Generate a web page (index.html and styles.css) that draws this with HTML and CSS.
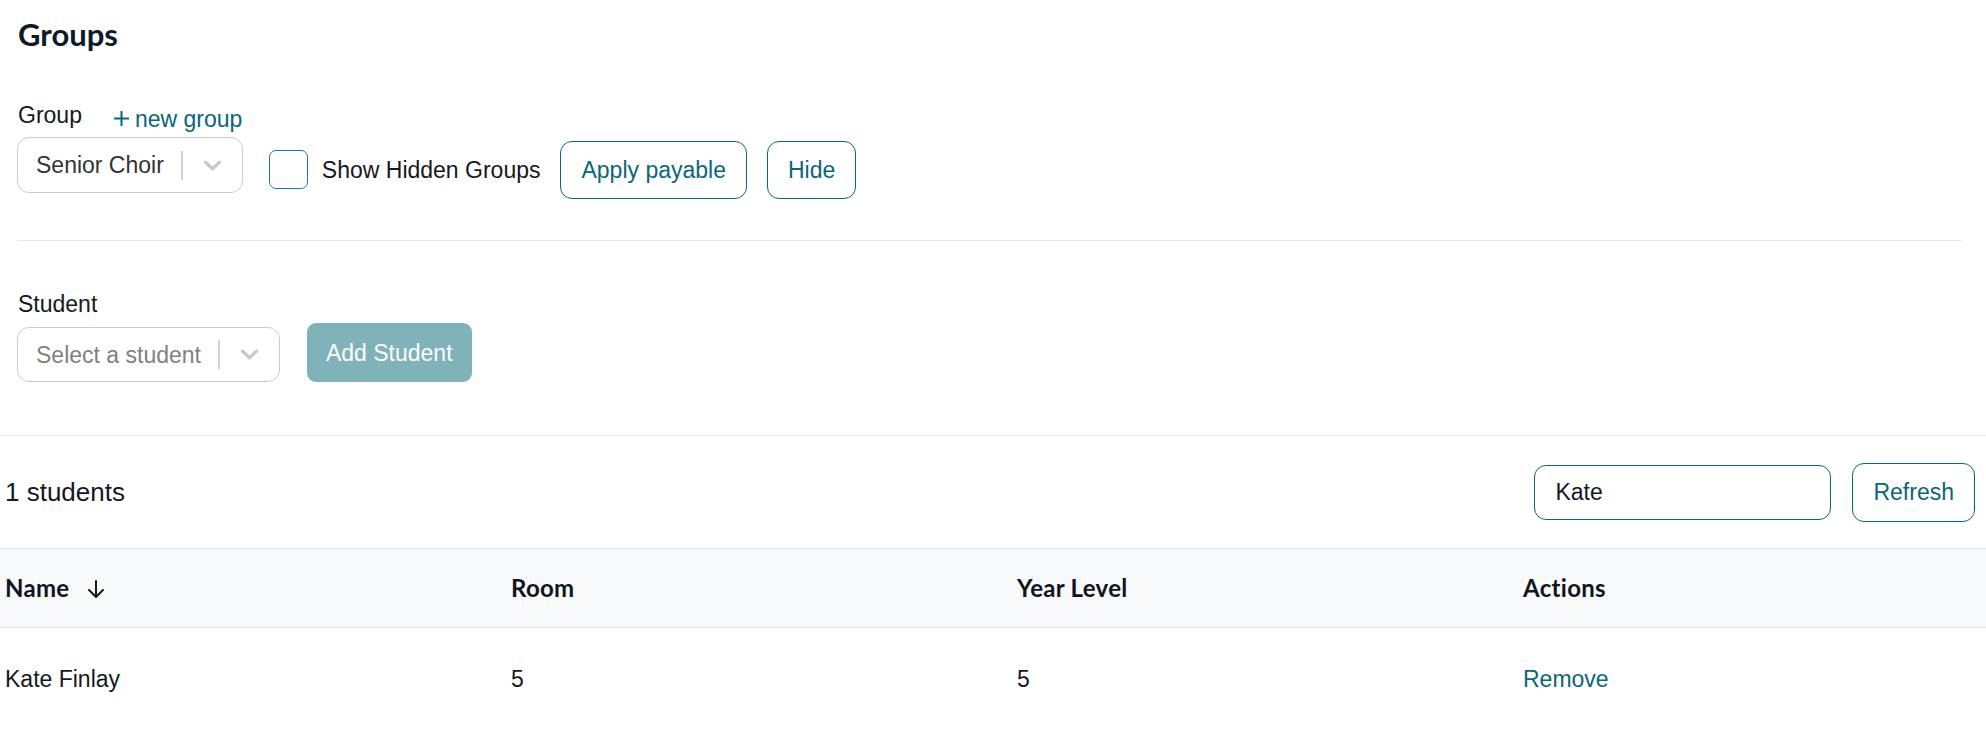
FILE: index.html
```html
<!DOCTYPE html>
<html lang="en">
<head>
<meta charset="utf-8">
<title>Groups</title>
<link rel="stylesheet" href="styles.css">
</head>
<body>
<div class="top">
  <h1 class="title">Groups</h1>

  <div class="group-row">
    <div class="field">
      <div class="label-row">
        <span class="label">Group</span>
        <a class="new-link" href="#"><svg class="plus" viewBox="0 0 17 17" width="17" height="17"><path d="M8.5 1v15M1 8.5h15" stroke="#0a6679" stroke-width="2" fill="none"/></svg>new group</a>
      </div>
      <div class="select select-group">
        <span class="select-value">Senior Choir</span>
        <span class="select-sep"></span>
        <svg class="chev" viewBox="0 0 19 11" width="19" height="11"><path d="M2.5 2.2L9.5 8.7L16.5 2.2" stroke="#c9c9c9" stroke-width="3.4" fill="none" stroke-linecap="round" stroke-linejoin="round"/></svg>
      </div>
    </div>
    <label class="check">
      <span class="box"></span>
      <span class="check-text">Show Hidden Groups</span>
    </label>
    <button class="btn btn-outline">Apply payable</button>
    <button class="btn btn-outline">Hide</button>
  </div>

  <div class="divider"></div>

  <div class="student-row">
    <div class="field">
      <div class="label student-label">Student</div>
      <div class="select select-student">
        <span class="select-placeholder">Select a student</span>
        <span class="select-sep"></span>
        <svg class="chev" viewBox="0 0 19 11" width="19" height="11"><path d="M2.5 2.2L9.5 8.7L16.5 2.2" stroke="#c9c9c9" stroke-width="3.4" fill="none" stroke-linecap="round" stroke-linejoin="round"/></svg>
      </div>
    </div>
    <button class="btn btn-disabled">Add Student</button>
  </div>
</div>

<div class="toolbar">
  <span class="count">1 students</span>
  <div class="tools">
    <input class="search" type="text" value="Kate">
    <button class="btn btn-outline btn-refresh">Refresh</button>
  </div>
</div>

<table class="table">
  <colgroup>
    <col class="c1"><col class="c2"><col class="c3"><col class="c4">
  </colgroup>
  <thead>
    <tr>
      <th>Name<svg class="sort" viewBox="0 0 18 19" width="18" height="19"><path d="M9 1v16M2 10l7 7 7-7" stroke="#14181f" stroke-width="2" fill="none" stroke-linecap="round" stroke-linejoin="round"/></svg></th>
      <th>Room</th>
      <th>Year Level</th>
      <th>Actions</th>
    </tr>
  </thead>
  <tbody>
    <tr>
      <td>Kate Finlay</td>
      <td>5</td>
      <td>5</td>
      <td><a class="remove" href="#">Remove</a></td>
    </tr>
  </tbody>
</table>
</body>
</html>
```

FILE: styles.css
```css
* { box-sizing: border-box; }

html, body {
  margin: 0;
  padding: 0;
  background: #ffffff;
}

body {
  font-family: "Liberation Sans", Arial, sans-serif;
  font-size: 23px;
  color: #14181f;
  overflow: hidden;
}

.top {
  padding: 16px 24px 53px 17px;
}

.title {
  margin: 0;
  font-family: Lato, "Noto Sans", sans-serif;
  font-weight: 700;
  font-size: 31px;
  line-height: 36px;
  color: #0d1a29;
  padding-left: 1px;
}

.group-row {
  display: flex;
  align-items: flex-end;
  margin-top: 50px;
}

.field {
  display: flex;
  flex-direction: column;
}

.label-row {
  display: flex;
  align-items: flex-start;
  height: 30px;
  margin-bottom: 5px;
}

.label {
  font-size: 23px;
  line-height: 26px;
  color: #14181f;
  padding-left: 1px;
}

.new-link {
  display: flex;
  align-items: center;
  margin-top: 4px;
  margin-left: 31px;
  line-height: 26px;
  color: #0a6679;
  text-decoration: none;
}

.plus {
  display: block;
  width: 17px;
  height: 17px;
  margin-right: 5px;
  margin-top: -2px;
}

.select {
  display: flex;
  align-items: center;
  border: 1px solid #cccccc;
  border-radius: 12px;
  background: #ffffff;
  padding: 0 20px 0 18px;
}

.select-group {
  height: 56px;
  margin-bottom: 6px;
}

.select-student {
  height: 55px;
}

.select-value {
  color: #333333;
  line-height: 26px;
}

.select-placeholder {
  color: #808080;
  line-height: 26px;
}

.select-sep {
  width: 2px;
  height: 29px;
  background: #d2d2d2;
  margin: 0 20px 0 17px;
}

.chev {
  display: block;
  width: 19px;
  height: 11px;
}

.check {
  display: flex;
  align-items: center;
  margin-left: 26px;
  margin-bottom: 10px;
}

.box {
  width: 39px;
  height: 39px;
  border: 1.5px solid #1f74c0;
  border-radius: 7px;
  background: #ffffff;
}

.check-text {
  margin-left: 14px;
  line-height: 26px;
  color: #14181f;
}

.btn {
  font-family: "Liberation Sans", Arial, sans-serif;
  font-size: 23px;
  line-height: 26px;
  padding: 0 20px;
  border-radius: 12px;
  cursor: pointer;
}

.btn-outline {
  height: 58px;
  margin-left: 20px;
  background: #ffffff;
  border: 1.5px solid #0a6679;
  color: #0a6679;
}

.btn-disabled {
  height: 59px;
  margin-left: 27px;
  padding: 0 19px;
  border: none;
  border-radius: 9px;
  background: #7fb2b9;
  color: #ffffff;
}

.divider {
  height: 1px;
  background: #e2e8f0;
  margin-top: 41px;
}

.student-row {
  display: flex;
  align-items: flex-end;
  margin-top: 50px;
}

.student-label {
  margin-bottom: 10px;
}

.toolbar {
  display: flex;
  align-items: center;
  justify-content: space-between;
  height: 113px;
  border-top: 1px solid #e2e8f0;
  padding: 0 11px 0 5px;
}

.count {
  font-size: 26px;
  line-height: 30px;
  color: #14181f;
}

.tools {
  display: flex;
  align-items: center;
}

.search {
  width: 297px;
  height: 55px;
  border: 1.5px solid #0a6679;
  border-radius: 12px;
  padding: 0 20px;
  font-family: "Liberation Sans", Arial, sans-serif;
  font-size: 23px;
  color: #14181f;
  outline: none;
}

.btn-refresh {
  height: 59px;
  margin-left: 21px;
}

.table {
  width: 100%;
  border-collapse: separate;
  border-spacing: 0;
  table-layout: fixed;
}

.c1, .c2, .c3 { width: 506px; }

.table th {
  text-align: left;
  font-family: Lato, "Noto Sans", sans-serif;
  font-weight: 700;
  font-size: 24px;
  letter-spacing: 0.3px;
  line-height: 24px;
  color: #0f1520;
  background: #f7f9fb;
  border-top: 1px solid #e2e8f0;
  border-bottom: 1px solid #e2e8f0;
  padding: 27px 0 27px 5px;
  white-space: nowrap;
}

.sort {
  display: inline-block;
  vertical-align: -2px;
  margin-left: 18px;
}

.table td {
  font-size: 23px;
  line-height: 26px;
  color: #14181f;
  padding: 38px 0 38px 5px;
}

.remove {
  color: #0a6679;
  text-decoration: none;
}
```
